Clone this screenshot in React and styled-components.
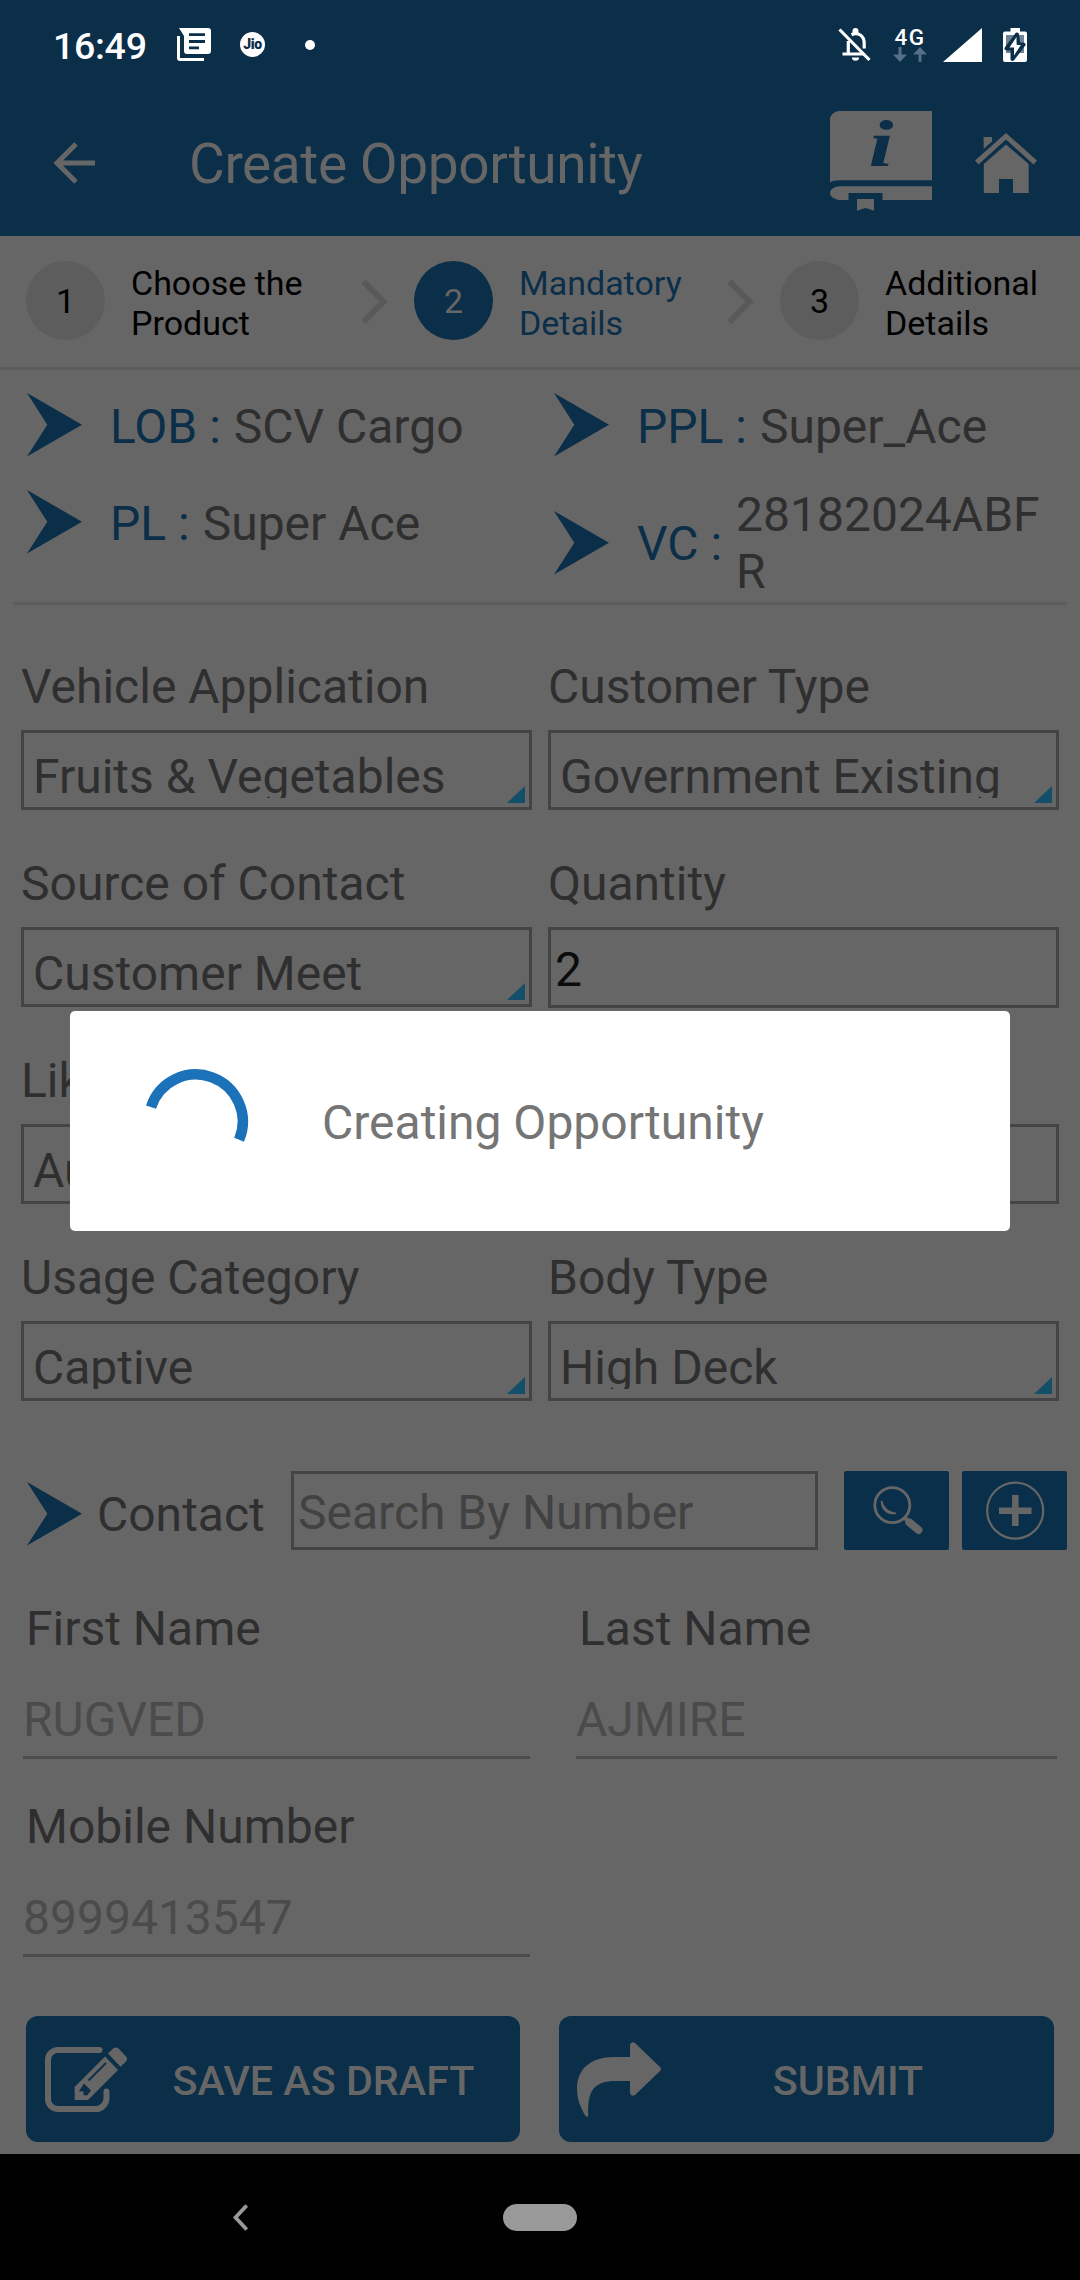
import React from "react";
import styled, { createGlobalStyle } from "styled-components";

const c = {
  navy: "#0b2e49",
  page: "#666666",
  text: "#2f2f2f",
  line: "#5c5c5c",
  border: "#444444",
};

const GlobalStyle = createGlobalStyle`
  * { box-sizing: border-box; }
  body {
    margin: 0;
    background: #000;
    font-family: Roboto, "Liberation Sans", sans-serif;
    color: ${c.text};
  }
  svg { display: block; flex: none; overflow: visible; }
`;

const Screen = styled.div`
  position: relative;
  display: flex;
  flex-direction: column;
  width: 1080px;
  height: 2280px;
  overflow: hidden;
  background: ${c.page};
`;

const StatusBar = styled.div`
  display: flex;
  align-items: center;
  height: 89px;
  padding: 0 53px 0 53px;
  background: ${c.navy};
  color: #fff;
`;
const Clock = styled.div`
  width: 124px;
  padding-top: 3px;
  font-size: 37.5px;
  font-weight: 500;
  line-height: 44px;
  letter-spacing: -0.3px;
`;
const Jio = styled.div`
  display: flex;
  align-items: center;
  justify-content: center;
  width: 25px;
  height: 25px;
  margin-left: 29px;
  border-radius: 50%;
  background: #fff;
  color: ${c.navy};
  font: 900 14px/25px Roboto, sans-serif;
  letter-spacing: -0.3px;
`;
const Dot = styled.div`
  width: 10px;
  height: 10px;
  margin-left: 40px;
  border-radius: 50%;
  background: #fff;
`;
const StatusRight = styled.div`
  display: flex;
  align-items: center;
  margin-left: auto;
`;
const Network = styled.div`
  display: flex;
  flex-direction: column;
  align-items: center;
  width: 34px;
  margin: 0 16px 0 22px;
  font-size: 22.5px;
  font-weight: 500;
  line-height: 19px;
  letter-spacing: 1.5px;
`;

const Toolbar = styled.header`
  display: flex;
  align-items: center;
  height: 147px;
  padding: 0 43px 0 53px;
  background: ${c.navy};
  color: ${c.page};
`;
const Title = styled.h1`
  margin: 0 auto 0 94px;
  padding-top: 3px;
  font-size: 55px;
  font-weight: 400;
  line-height: 66px;
  letter-spacing: -0.42px;
`;
const BookSlot = styled.div`
  margin-right: 43px;
  padding-bottom: 3px;
`;

const Steps = styled.div`
  display: flex;
  height: 134px;
  padding: 25px 0 0 26px;
  border-bottom: 3px solid ${c.line};
`;
const Step = styled.div`
  display: flex;
  align-items: flex-start;
  width: ${(p) => p.$width}px;
  color: ${(p) => (p.$active ? c.navy : "#000")};
  font-size: 34px;
`;
const StepNumber = styled.div`
  flex: none;
  width: 79px;
  height: 79px;
  padding-top: 1px;
  border-radius: 50%;
  background: ${(p) => (p.$active ? c.navy : "#5d5d5d")};
  color: ${(p) => (p.$active ? c.page : "#000")};
  line-height: 79px;
  text-align: center;
`;
const StepLabel = styled.div`
  flex: 1;
  padding: 2px 0 0 26px;
  line-height: 40px;
`;
const StepArrow = styled.div`
  margin: 18px 26px 0 0;
`;

const Summary = styled.div`
  display: grid;
  grid-template-columns: 527px 1fr;
  height: 235px;
  margin: 0 13px;
  padding: 23px 0 0 14px;
  border-bottom: 3px solid ${c.line};
`;
const SummaryColumn = styled.div`
  display: flex;
  flex-direction: column;
  gap: ${(p) => p.$gap}px;
`;
const SummaryRow = styled.div`
  display: flex;
  align-items: center;
  min-height: 64px;
  font-size: 48px;
  line-height: 56.5px;
`;
const SummaryKey = styled.div`
  padding: ${(p) => (p.$tall ? 2 : 4)}px 0 0 28px;
  color: ${c.navy};
  white-space: nowrap;
`;
const SummaryValue = styled.div`
  max-width: 320px;
  margin-left: ${(p) => (p.$tall ? 14 : 13)}px;
  padding-top: ${(p) => (p.$tall ? 1 : 4)}px;
  word-break: break-all;
`;

const Form = styled.div`
  display: grid;
  grid-template-columns: 511px 511px;
  gap: 45px 16px;
  padding: 53px 21px 0;
`;
const Field = styled.div`
  height: 152px;
  font-size: 48px;
  line-height: 56px;
`;
const FieldLabel = styled.div`
  height: 56px;
  margin-bottom: 16px;
  padding-top: 1px;
  white-space: nowrap;
`;
const SelectBox = styled.div`
  display: flex;
  justify-content: space-between;
  height: 80px;
  padding: 16px 4px 4px 9px;
  border: 3px solid ${c.border};
`;
const SelectText = styled.div`
  height: 49px;
  overflow: hidden;
  white-space: nowrap;
`;
const Corner = styled.svg`
  align-self: flex-end;
`;
const InputBox = styled.div`
  height: ${(p) => p.$height || 80}px;
  padding: 12px 0 0 4px;
  border: 3px solid ${c.border};
  color: #0c0c0c;
`;

const ContactRow = styled.div`
  display: flex;
  height: 79px;
  margin-top: 70px;
  padding: 0 13px 0 27px;
  font-size: 48px;
`;
const ContactTitle = styled.div`
  display: flex;
  align-items: center;
  gap: 15px;
  padding-top: 6px;
`;
const ContactText = styled.div`
  padding-top: 1px;
`;
const SearchInput = styled.div`
  width: 527px;
  margin-left: auto;
  padding: 1px 0 0 4px;
  border: 3px solid ${c.border};
  color: #424242;
  line-height: 75px;
`;
const SquareButton = styled.div`
  width: 105px;
  margin-left: ${(p) => p.$gap}px;
  border-radius: 2px;
  background: #0a2f4b;
`;

const Person = styled.div`
  display: grid;
  grid-template-columns: 507px 481px;
  gap: 40px 46px;
  padding: 51px 0 0 23px;
`;
const PersonField = styled.div`
  font-size: 48px;
  line-height: 56px;
`;
const PersonLabel = styled.div`
  padding-left: 3px;
  margin-bottom: 35px;
`;
const PersonValue = styled.div`
  height: 67px;
  border-bottom: 3px solid #4c4c4c;
  color: #4b4b4b;
`;

const Actions = styled.div`
  display: flex;
  gap: 39px;
  margin-top: auto;
  padding: 0 26px 12px;
`;
const ActionButton = styled.div`
  display: flex;
  flex: none;
  align-items: center;
  width: ${(p) => p.$width}px;
  height: 126px;
  padding: 0 ${(p) => p.$right || 0}px 0 ${(p) => p.$left}px;
  border-radius: 12px;
  background: ${c.navy};
  color: ${c.page};
`;
const ActionText = styled.div`
  flex: 1;
  padding-top: 3px;
  font-size: 41.25px;
  font-weight: 500;
  text-align: center;
`;

const NavBar = styled.div`
  display: flex;
  flex: none;
  align-items: center;
  gap: 255px;
  height: 126px;
  padding-left: 233px;
  background: #000;
`;
const Pill = styled.div`
  width: 74px;
  height: 27px;
  border-radius: 14px;
  background: #999;
`;

const Dialog = styled.div`
  position: absolute;
  left: 70px;
  top: 1011px;
  display: flex;
  align-items: center;
  width: 940px;
  height: 220px;
  padding-left: 73px;
  border-radius: 5px;
  background: #fff;
  color: #757575;
  font-size: 48px;
  line-height: 56px;
`;
const DialogText = styled.div`
  padding: 3px 0 0 73px;
`;

const Dart = () => (
  <svg width="55" height="64" viewBox="0 0 55 64" fill={c.navy}>
    <path d="M0 0L55 31.8L0 63.5L20.3 31.8Z" />
  </svg>
);

const Select = ({ label, value }) => (
  <Field>
    <FieldLabel>{label}</FieldLabel>
    <SelectBox>
      <SelectText>{value}</SelectText>
      <Corner width="18" height="17" viewBox="0 0 18 17" fill="#144f69">
        <path d="M18 0V17H0Z" />
      </Corner>
    </SelectBox>
  </Field>
);

const Input = ({ label, value, height }) => (
  <Field>
    <FieldLabel>{label}</FieldLabel>
    <InputBox $height={height}>{value}</InputBox>
  </Field>
);

const SummaryItem = ({ name, value, tall }) => (
  <SummaryRow>
    <Dart />
    <SummaryKey $tall={tall}>{name} :</SummaryKey>
    <SummaryValue $tall={tall}>{value}</SummaryValue>
  </SummaryRow>
);

const StepItem = ({ number, width, active, last, children }) => (
  <Step $width={width} $active={active}>
    <StepNumber $active={active}>{number}</StepNumber>
    <StepLabel>{children}</StepLabel>
    {!last && (
      <StepArrow>
        <svg width="27" height="46" viewBox="0 0 27 46" fill="none" stroke="#58595b" strokeWidth="6">
          <path d="M2.5 2.5L22.5 22.7L2.5 43" />
        </svg>
      </StepArrow>
    )}
  </Step>
);

const PersonItem = ({ label, value }) => (
  <PersonField>
    <PersonLabel>{label}</PersonLabel>
    <PersonValue>{value}</PersonValue>
  </PersonField>
);

const NewsIcon = () => (
  <svg width="34" height="33" viewBox="0 0 34 33" fill="#fff">
    <path d="M2 0H31a3 3 0 0 1 3 3V23a3 3 0 0 1-3 3H10a3 3 0 0 1-3-3V8Z" />
    <path d="M0 8H3V30H27V33H3a3 3 0 0 1-3-3Z" />
    <path d="M12 5.3h16v2.7H12zM12 12h16v3H12zM12 18.6h10v2.7H12z" fill={c.navy} />
  </svg>
);

const BellOffIcon = () => (
  <svg width="33" height="33" viewBox="0 0 33 33" fill="none" stroke="#fff" strokeWidth="3.2">
    <path d="M1.5 1.5L31.5 32" />
    <path d="M10.3 13V26M4.5 26H26" />
    <path d="M13.5 6.8C20 3.5 26.2 8 26.2 15V20.5" />
    <path d="M14.5 5V3a3 3 0 0 1 6 0V5Z" fill="#fff" stroke="none" />
    <path d="M14 29.5h7a3.5 3.2 0 0 1-7 0Z" fill="#fff" stroke="none" />
  </svg>
);

const DataArrows = () => (
  <svg width="34" height="15" viewBox="0 0 34 15" fill="#557088">
    <path d="M5.5 0h3v7.5H14L7 15L0 7.5H5.5zM25.5 15h3V7.5H34L27 0L20 7.5h5.5z" />
  </svg>
);

const BatteryIcon = () => (
  <svg width="24" height="34" viewBox="0 0 24 34" fill="#fff">
    <path d="M7.5 0H17V3.5H22a2 2 0 0 1 2 2V32a2 2 0 0 1-2 2H2a2 2 0 0 1-2-2V5.500a2 2 0 0 1 2-2H7.500Z" />
    <path d="M3 7H21V25H3Z" fill="#6d8294" />
    <path d="M14 6.500L3.500 20.500H9.500V31L20.500 16.500H15.500Z" fill="#fff" stroke={c.navy} strokeWidth="4" strokeLinejoin="round" />
    <path d="M13.500 9L6.500 19.500H11V27.500L17.800 17H13.500Z" />
  </svg>
);

const BookIcon = () => (
  <svg width="102" height="100" viewBox="0 0 102 100" fill={c.page}>
    <path d="M9 0H102V69.300H9Q3 69.300 0 71.500V7Q2 1 9 0Z" />
    <path d="M9 75.300H102V89H52.500V82H18.500V89H9C-3 87-3 77 9 75.300Z" />
    <path d="M27 88H44V99.700L35.500 97L27 99.700Z" />
    <text x="38.500" y="55" fontFamily="Liberation Serif, serif" fontStyle="italic" fontWeight="700" fontSize="65" textLength="25" lengthAdjust="spacingAndGlyphs" fill={c.navy}>
      i
    </text>
  </svg>
);

const HomeIcon = () => (
  <svg width="62" height="60" viewBox="0 0 62 60" fill={c.page}>
    <path d="M31 0L62 27.500L58.500 31.500L31 6.500L3.500 31.500L0 27.500Z" />
    <path d="M8.600 4H17V8.500L8.600 16Z" />
    <path d="M31 11.500L53.700 31V60H38V46H24V60H8.800V31Z" />
  </svg>
);

const EditIcon = () => (
  <svg width="82" height="65" viewBox="0 0 82 65" fill={c.page}>
    <path d="M54.500 3H13A10 10 0 0 0 3 13V52A10 10 0 0 0 13 62H50A11 11 0 0 0 61.500 51V44.500" fill="none" stroke={c.page} strokeWidth="6" strokeLinecap="round" />
    <path d="M60 9.500L73 23L43 53H29.600V40Z" stroke={c.navy} strokeWidth="5" paintOrder="stroke" />
    <path d="M63 6.500L68.500 1.200Q71-.5 73.500 1.500L81 9.500Q83 12 81 14.500L75.500 19.700Z" />
    <path d="M61 16L43.500 33.500" stroke={c.navy} strokeWidth="2" />
    <path d="M39 36.500L46 43.500L42 48.500L38.500 48V44.500L34 44.300Z" fill={c.navy} />
  </svg>
);

const ShareIcon = () => (
  <svg width="84" height="75" viewBox="0 0 84 75" fill={c.page}>
    <path d="M53 15V3Q54-1 58 1L83 25Q85 27 83 29L58 53Q54 55 53 51V39H38C19 39 10 47 11.300 73Q11 76 8.500 74C4 66 0 58 0 47C0 28 12 15 38 15Z" />
  </svg>
);

export default function App() {
  return (
    <Screen>
      <GlobalStyle />
      <StatusBar>
        <Clock>16:49</Clock>
        <NewsIcon />
        <Jio>Jio</Jio>
        <Dot />
        <StatusRight>
          <BellOffIcon />
          <Network>
            <span>4G</span>
            <DataArrows />
          </Network>
          <svg width="39" height="34" viewBox="0 0 39 34" fill="#fff">
            <path d="M39 0V34H0Z" />
          </svg>
          <svg width="21" height="34" />
          <BatteryIcon />
        </StatusRight>
      </StatusBar>

      <Toolbar>
        <svg width="42" height="42" viewBox="0 0 42 42" fill="none" stroke={c.page} strokeWidth="5">
          <path d="M23 2L4 21L23 40M4 21H42" />
        </svg>
        <Title>Create Opportunity</Title>
        <BookSlot>
          <BookIcon />
        </BookSlot>
        <HomeIcon />
      </Toolbar>

      <Steps>
        <StepItem number="1" width={388}>
          Choose the
          <br />
          Product
        </StepItem>
        <StepItem number="2" width={366} active>
          Mandatory
          <br />
          Details
        </StepItem>
        <StepItem number="3" width={290} last>
          Additional
          <br />
          Details
        </StepItem>
      </Steps>

      <Summary>
        <SummaryColumn $gap={33}>
          <SummaryItem name="LOB" value="SCV Cargo" />
          <SummaryItem name="PL" value="Super Ace" />
        </SummaryColumn>
        <SummaryColumn $gap={29}>
          <SummaryItem name="PPL" value="Super_Ace" />
          <SummaryItem name="VC" value="28182024ABFR" tall />
        </SummaryColumn>
      </Summary>

      <Form>
        <Select label="Vehicle Application" value="Fruits & Vegetables" />
        <Select label="Customer Type" value="Government Existing" />
        <Select label="Source of Contact" value="Customer Meet" />
        <Input label="Quantity" value="2" height={81} />
        <Select label="Lik" value="Au" />
        <Input />
        <Select label="Usage Category" value="Captive" />
        <Select label="Body Type" value="High Deck" />
      </Form>

      <ContactRow>
        <ContactTitle>
          <Dart />
          <ContactText>Contact</ContactText>
        </ContactTitle>
        <SearchInput>Search By Number</SearchInput>
        <SquareButton $gap={26}>
          <svg width="105" height="79" viewBox="0 0 105 79" fill="none" stroke={c.page}>
            <circle cx="48.300" cy="34.200" r="17.500" strokeWidth="2.800" />
            <path d="M37.500 30C37.500 38 43 43.500 52 42.500C44 41.500 39 37 37.500 30Z" strokeWidth="1.500" fill={c.page} />
            <path d="M60.500 46.500L64 50" strokeWidth="4" />
            <path d="M65.500 51.500L74.500 59" strokeWidth="8" strokeLinecap="round" />
          </svg>
        </SquareButton>
        <SquareButton $gap={13}>
          <svg width="105" height="79" viewBox="0 0 105 79" fill="none" stroke={c.page}>
            <circle cx="53.200" cy="39.600" r="28" strokeWidth="2.200" />
            <path d="M37 39.700H69.500M53.300 24V55" strokeWidth="6.500" />
          </svg>
        </SquareButton>
      </ContactRow>

      <Person>
        <PersonItem label="First Name" value="RUGVED" />
        <PersonItem label="Last Name" value="AJMIRE" />
        <PersonItem label="Mobile Number" value="8999413547" />
      </Person>

      <Actions>
        <ActionButton $width={494} $left={19}>
          <EditIcon />
          <ActionText>SAVE AS DRAFT</ActionText>
        </ActionButton>
        <ActionButton $width={495} $left={18} $right={19}>
          <ShareIcon />
          <ActionText>SUBMIT</ActionText>
        </ActionButton>
      </Actions>

      <NavBar>
        <svg width="15" height="27" viewBox="0 0 15 27" fill="none" stroke="#999" strokeWidth="3.800">
          <path d="M13.700 1.500L2.500 13.500L13.700 25.500" />
        </svg>
        <Pill />
      </NavBar>

      <Dialog>
        <svg width="106" height="106" viewBox="-53 -53 106 106" fill="none" stroke="#1c72b8" strokeWidth="10.500">
          <path d="M-45-13.800A47 47 0 1 1 43.100 18.700" />
        </svg>
        <DialogText>Creating Opportunity</DialogText>
      </Dialog>
    </Screen>
  );
}
